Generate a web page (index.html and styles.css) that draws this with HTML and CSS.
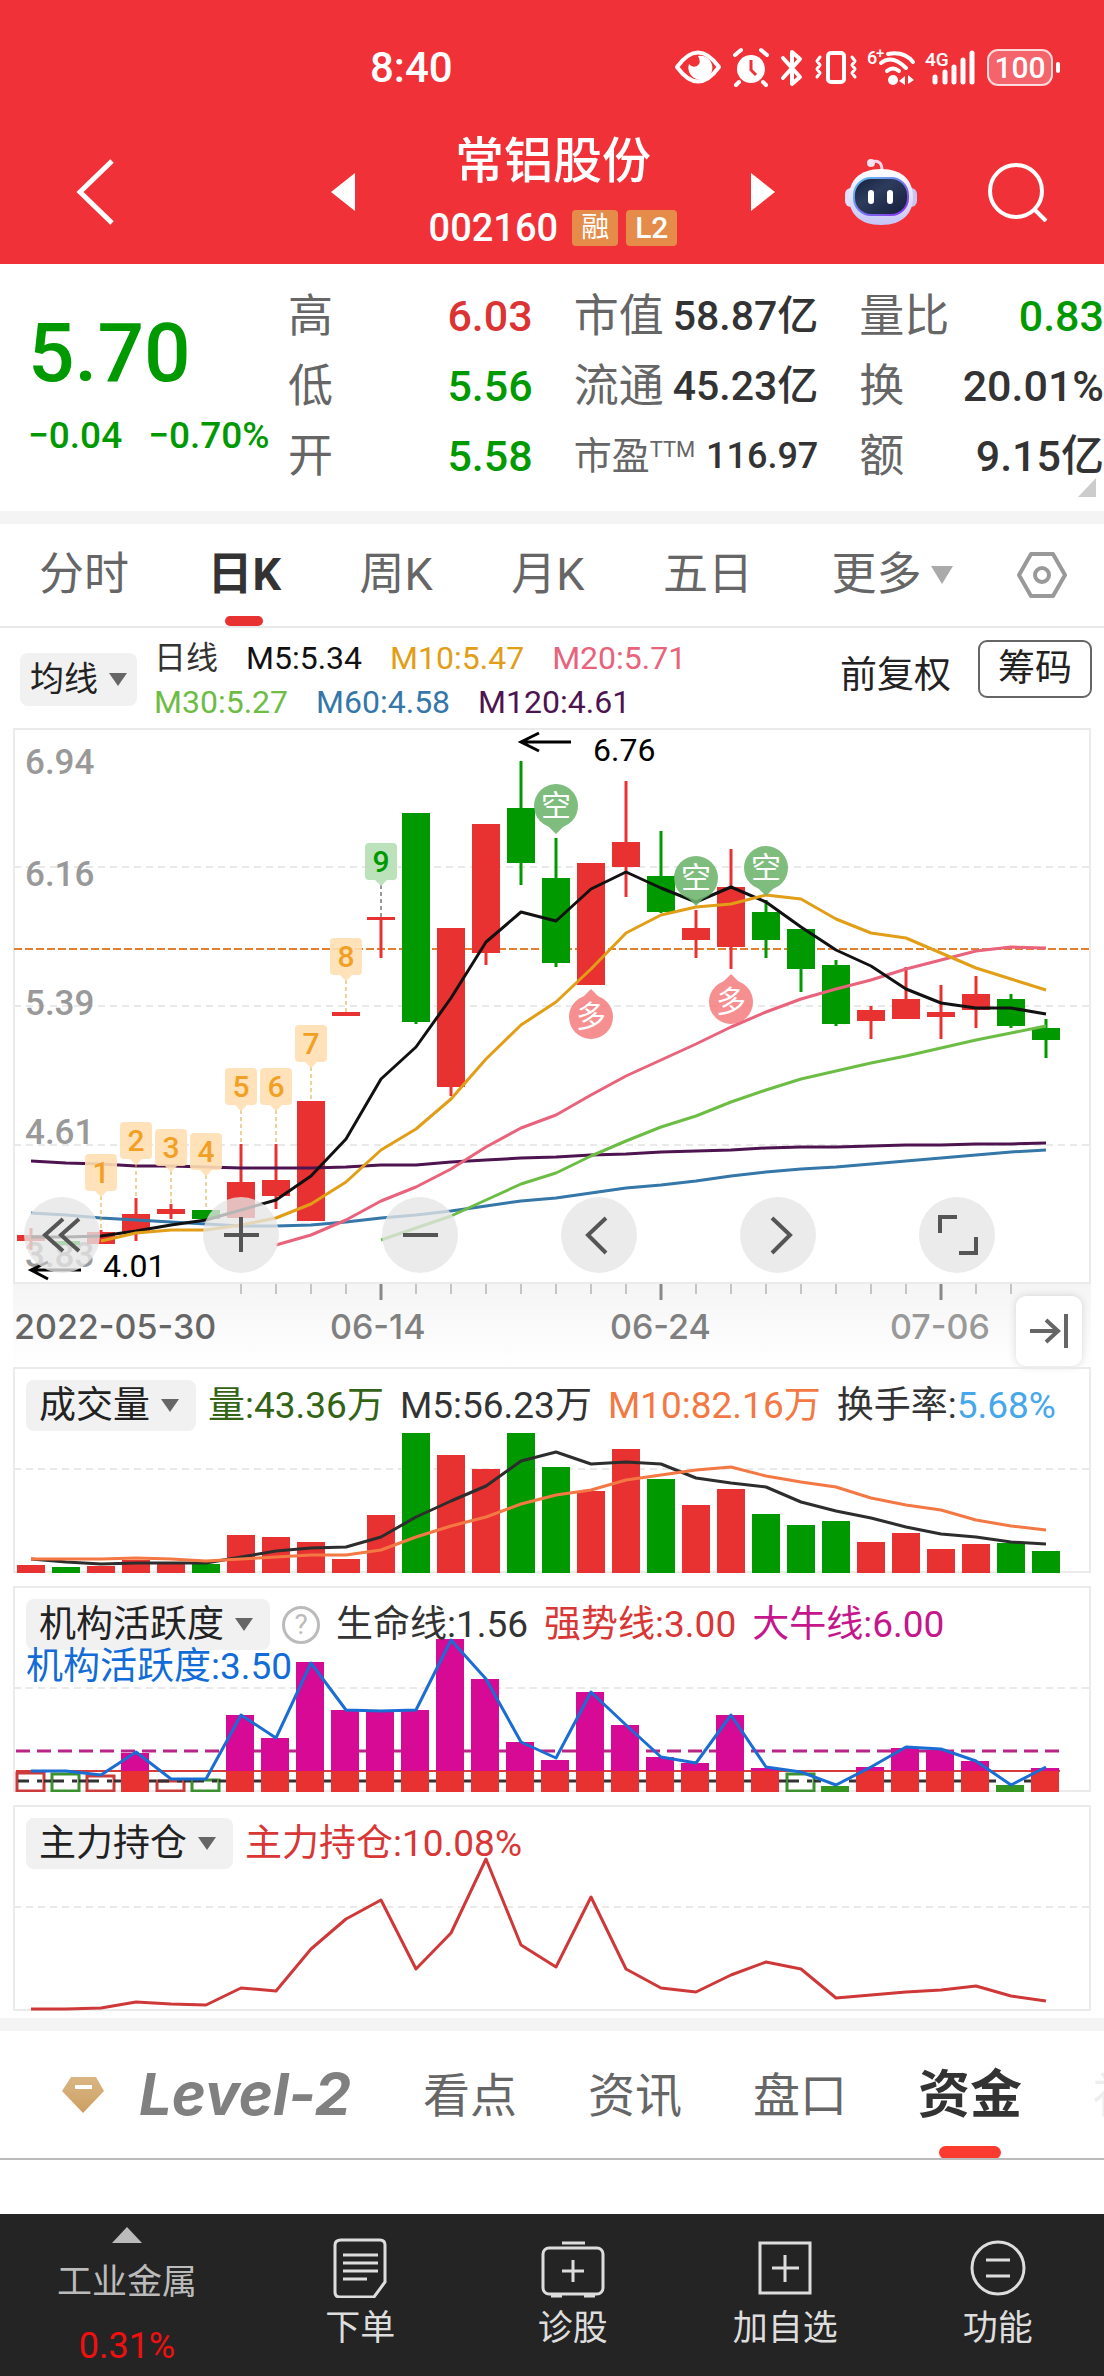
FILE: index.html
```html
<!DOCTYPE html>
<html lang="zh-CN">
<head>
<meta charset="utf-8">
<meta name="viewport" content="width=device-width, initial-scale=1">
<title>常铝股份 002160</title>
<link rel="stylesheet" href="styles.css">
</head>
<body>
<header class="top">
  <div class="status">
    <time class="clock">8:40</time>
    <svg class="status-icons" viewBox="670 44 394 48" aria-hidden="true">
      <g fill="none" stroke="#fff" stroke-width="4" stroke-linecap="round" stroke-linejoin="round">
        <path d="M677 67Q698 38 719 67Q698 96 677 67Z"/>
        <path d="M735 55l6-5M767 55l-6-5M739 82l-3 3M763 82l3 3"/>
        <path d="M783 58l17 19-8 7V52l8 7-17 19" stroke-width="4"/>
        <rect x="828" y="53" width="16" height="29" rx="3"/>
        <path d="M820 57l-3 4 3 4-3 4 3 4-3 4M852 57l3 4-3 4 3 4-3 4 3 4" stroke-width="3"/>
        <path d="M888 54Q904 51 913 62M881 63Q892 54 906 68M887 71Q893 66 899 71" stroke-width="4"/>
        <path d="M935 77v5M945 72v10M954 67v15M963 60v22M972 53v29" stroke-width="5"/>
      </g>
      <path fill="#fff" d="M698 56a12 12 0 1 1-9 8q3 4 8 2q5-3 1-10z"/>
      <circle cx="751" cy="69" r="14" fill="#fff"/>
      <path d="M751 60v10l5 5" fill="none" stroke="#f13138" stroke-width="3"/>
      <circle cx="893" cy="80" r="5" fill="#fff"/>
      <path d="M899 81l6-5v9zM914 80l-6-5v9z" fill="#fff"/>
      <rect x="988" y="50" width="64" height="35" rx="10" fill="#fff" fill-opacity=".25" stroke="#fff" stroke-opacity=".8" stroke-width="2"/>
      <path d="M1058 64v7" stroke="#fff" stroke-width="4" stroke-linecap="round"/>
      <g fill="#fff" font-weight="500">
        <text x="867" y="64" font-size="18">6</text>
        <text x="876" y="58" font-size="15">+</text>
        <text x="925" y="66" font-size="19">4G</text>
        <text x="1020" y="78" font-size="30" text-anchor="middle">100</text>
      </g>
    </svg>
  </div>
  <nav class="title-bar">
    <div class="bar-side">
      <button class="plain" aria-label="返回"><svg width="38" height="66" viewBox="0 0 38 66"><path d="M36 2L4 33l32 31" fill="none" stroke="#fff" stroke-width="5"/></svg></button>
      <button class="plain" aria-label="上一只"><svg width="24" height="38" viewBox="0 0 24 38"><path d="M24 0v38L0 19z" fill="#fff"/></svg></button>
    </div>
    <div class="stock">
      <h1>常铝股份</h1>
      <p><span>002160</span><b class="badge">融</b><b class="badge badge-l2">L2</b></p>
    </div>
    <div class="bar-side">
      <button class="plain" aria-label="下一只"><svg width="24" height="38" viewBox="0 0 24 38"><path d="M0 0v38l24-19z" fill="#fff"/></svg></button>
      <button class="plain" aria-label="智能助手"><svg width="72" height="68" viewBox="844 155 72 68">
        <defs>
          <linearGradient id="shell" x1="0" y1="0" x2="0" y2="1"><stop offset="0" stop-color="#fff"/><stop offset="1" stop-color="#c5c4f5"/></linearGradient>
          <linearGradient id="visor" x1="0" y1="0" x2="1" y2="1"><stop offset="0" stop-color="#17203f"/><stop offset=".4" stop-color="#2d3b5c"/><stop offset="1" stop-color="#141c3a"/></linearGradient>
          <linearGradient id="rim" x1="0" y1="0" x2="1" y2="1"><stop offset="0" stop-color="#5fc6f0"/><stop offset="1" stop-color="#8a2be8"/></linearGradient>
        </defs>
        <path d="M870 159q11-3 11 8" fill="none" stroke="#f3d6ea" stroke-width="3"/>
        <circle cx="870" cy="160" r="4" fill="#f6e2f0"/>
        <rect x="844" y="185" width="12" height="19" rx="6" fill="#e4dff8"/><rect x="904" y="185" width="12" height="19" rx="6" fill="#c9c4f2"/>
        <path d="M880 166c22 0 32 12 32 28s-10 28-32 28-32-12-32-28 10-28 32-28z" fill="url(#shell)"/>
        <rect x="853" y="175" width="54" height="37" rx="17" fill="url(#visor)" stroke="url(#rim)" stroke-width="2"/>
        <path d="M870 190v8M889 190v8" stroke="#fff" stroke-width="6" stroke-linecap="round"/>
      </svg></button>
      <button class="plain" aria-label="搜索"><svg width="60" height="60" viewBox="988 161 60 60"><circle cx="1016" cy="190" r="26" fill="none" stroke="#fff" stroke-width="4"/><path d="M1035 209l11 11" stroke="#fff" stroke-width="4"/></svg></button>
    </div>
  </nav>
</header>

<section class="quote">
  <div class="quote-price">
    <strong>5.70</strong>
    <p><span>−0.04</span><span>−0.70%</span></p>
  </div>
  <dl>
    <div><dt>高</dt><dd class="up">6.03</dd></div>
    <div><dt>低</dt><dd class="down">5.56</dd></div>
    <div><dt>开</dt><dd class="down">5.58</dd></div>
  </dl>
  <dl class="mid">
    <div><dt>市值</dt><dd>58.87亿</dd></div>
    <div><dt>流通</dt><dd>45.23亿</dd></div>
    <div class="small"><dt>市盈<sup>TTM</sup></dt><dd>116.97</dd></div>
  </dl>
  <dl>
    <div><dt>量比</dt><dd class="down">0.83</dd></div>
    <div><dt>换</dt><dd>20.01%</dd></div>
    <div><dt>额</dt><dd>9.15亿</dd></div>
  </dl>
</section>

<nav class="periods">
  <button>分时</button>
  <button class="on">日K</button>
  <button>周K</button>
  <button>月K</button>
  <button>五日</button>
  <button class="more">更多<i class="caret"></i></button>
  <button aria-label="设置"><svg width="50" height="46" viewBox="0 0 50 46" fill="none" stroke="#999" stroke-width="4" stroke-linejoin="round"><path d="M14 2h22l12 21-12 21H14L2 23z"/><circle cx="25" cy="23" r="7"/></svg></button>
</nav>

<section class="averages">
  <button class="tag tag-ma">均线<i class="caret"></i></button>
  <div class="ma-list">
    <p><span class="c-ink">日线</span><span class="c-black">M5:5.34</span><span class="c-m10">M10:5.47</span><span class="c-m20">M20:5.71</span></p>
    <p><span class="c-m30">M30:5.27</span><span class="c-m60">M60:4.58</span><span class="c-m120">M120:4.61</span></p>
  </div>
  <span class="adjust">前复权</span>
  <button class="chips">筹码</button>
</section>

<main class="charts">
  <section class="panel">
    <svg id="kline" viewBox="13 728 1078 556" role="img" aria-label="日K线图"></svg>
    <div class="tools">
      <button aria-label="最早"><svg viewBox="0 0 76 76"><path d="M39 22L21 38l18 16M55 22L37 38l18 16"/></svg></button>
      <button aria-label="放大"><svg viewBox="0 0 76 76"><path d="M21 38h35M38 20v35"/></svg></button>
      <button aria-label="缩小"><svg viewBox="0 0 76 76"><path d="M21 38h35"/></svg></button>
      <button aria-label="左移"><svg viewBox="0 0 76 76"><path d="M45 21L27 38l18 18"/></svg></button>
      <button aria-label="右移"><svg viewBox="0 0 76 76"><path d="M32 21l18 17-18 18"/></svg></button>
      <button aria-label="全屏"><svg viewBox="0 0 76 76"><path d="M21 36V20h17M57 40v16H40"/></svg></button>
    </div>
  </section>

  <div class="axis">
    <svg id="axis" viewBox="13 1284 1078 83" role="img" aria-label="日期轴"></svg>
    <button class="latest" aria-label="最新"><svg width="40" height="36" viewBox="0 0 40 36" fill="none" stroke="#666" stroke-width="4"><path d="M1 18h27M17 7l12 11-12 11M37 1v34"/></svg></button>
  </div>

  <section class="panel">
    <svg id="volume" viewBox="13 1367 1078 206" role="img" aria-label="成交量图"></svg>
    <div class="legend">
      <button class="tag">成交量<i class="caret"></i></button>
      <span class="c-vol">量:43.36万</span><span class="c-ink">M5:56.23万</span><span class="c-orange">M10:82.16万</span><span class="c-ink">换手率:<em>5.68%</em></span>
    </div>
  </section>

  <section class="panel">
    <svg id="activity" viewBox="13 1586 1078 206" role="img" aria-label="机构活跃度图"></svg>
    <div class="legend">
      <button class="tag">机构活跃度<i class="caret"></i></button>
      <button class="help" aria-label="说明">?</button>
      <span class="c-ink">生命线:1.56</span><span class="c-red">强势线:3.00</span><span class="c-bull">大牛线:6.00</span>
      <span class="c-blue second">机构活跃度:3.50</span>
    </div>
  </section>

  <section class="panel">
    <svg id="holding" viewBox="13 1805 1078 206" role="img" aria-label="主力持仓图"></svg>
    <div class="legend">
      <button class="tag">主力持仓<i class="caret"></i></button>
      <span class="c-red">主力持仓:10.08%</span>
    </div>
  </section>
</main>

<nav class="topics">
  <a href="#level2" class="level"><svg width="44" height="38" viewBox="0 0 44 38"><defs><linearGradient id="gold" x1="0" y1="0" x2="0" y2="1"><stop offset="0" stop-color="#dab684"/><stop offset="1" stop-color="#cc9f62"/></linearGradient></defs><path d="M10 1h25l8 14-21 22L1 15z" fill="url(#gold)"/><path d="M14 11h17" stroke="#fff" stroke-width="4"/></svg><span>Level-2</span></a>
  <a href="#view">看点</a>
  <a href="#news">资讯</a>
  <a href="#depth">盘口</a>
  <a href="#funds" class="on">资金</a>
  <a href="#community" class="next">社区</a>
</nav>

<footer class="actions">
  <a href="#sector" class="sector"><i class="caret-up"></i><span>工业金属</span><b>0.31%</b></a>
  <button><svg width="60" height="60" viewBox="0 0 60 60"><path d="M11 2h39q5 0 5 5v37L44 59H10q-5 0-5-5V7q0-5 6-5z"/><path d="M13 17h35M13 25h35M13 33h35M13 41h24"/></svg>下单</button>
  <button><svg width="64" height="60" viewBox="0 0 64 60"><rect x="2" y="10" width="60" height="46" rx="6"/><path d="M21 5h23M32 22v22M21 33h22M10 58h11M43 58h11"/></svg>诊股</button>
  <button><svg width="60" height="60" viewBox="0 0 60 60"><path d="M5 5h50v50H5zM30 17v27M17 30h27"/></svg>加自选</button>
  <button><svg width="60" height="60" viewBox="0 0 60 60"><circle cx="30" cy="30" r="26"/><path d="M18 22h24M18 38h24"/></svg>功能</button>
</footer>
<script src="charts.js"></script>
</body>
</html>
```
FILE: styles.css
```css
* { box-sizing: border-box; margin: 0; padding: 0; }
body { background: #fff; color: #333; font-family: Roboto, "Noto Sans CJK SC", sans-serif; font-size: 36px; line-height: 1.2; min-height: 100vh; display: flex; flex-direction: column; overflow-x: hidden; }
button { border: 0; background: none; font: inherit; color: inherit; cursor: pointer; }
a { color: inherit; text-decoration: none; }
svg { display: block; }
em, i { font-style: normal; }
svg text { font-family: Roboto, "Noto Sans CJK SC", sans-serif; }
svg .date { font-family: Inter, sans-serif; font-weight: 500; }

.top { background: #f13138; color: #fff; height: 264px; }
.status { height: 112px; padding: 24px 40px 0 370px; display: flex; align-items: center; justify-content: space-between; }
.clock { font-size: 42px; font-weight: 500; }
.status-icons { width: 394px; height: 48px; }
.title-bar { height: 152px; padding: 0 56px 0 76px; display: grid; grid-template-columns: 279fr 395fr 297fr; align-items: center; }
.bar-side { display: flex; align-items: center; justify-content: space-between; padding-top: 8px; }
.stock { text-align: center; padding-top: 8px; }
.stock h1 { font-size: 49px; line-height: 64px; font-weight: 500; }
.stock p { display: flex; justify-content: center; align-items: center; gap: 8px; margin-top: 8px; font-size: 38px; font-weight: 500; line-height: 52px; }
.stock p span { margin-right: 6px; }
.badge { background: #e58c4a; border-radius: 4px; font-size: 28px; font-weight: 400; line-height: 36px; padding: 0 9px; }
.badge-l2 { font-size: 30px; font-weight: 500; }

.quote { position: relative; display: grid; grid-template-columns: 219px 1fr 1fr 1fr; column-gap: 41px; padding: 18px 0 19px 28px; }
.quote::after { content: ""; position: absolute; right: 8px; bottom: 14px; border-style: solid; border-width: 0 0 19px 18px; border-color: transparent transparent #ccc; }
.quote-price { color: #090; padding-top: 26px; font-weight: 500; white-space: nowrap; }
.quote-price strong { display: block; font-size: 82px; font-weight: 500; line-height: 90px; }
.quote-price p { display: flex; gap: 26px; margin-top: 18px; font-size: 37px; line-height: 40px; }
.quote dl div { display: flex; justify-content: space-between; align-items: center; height: 70px; white-space: nowrap; }
.quote dt { font-size: 45px; color: #666; }
.quote dd { font-size: 43px; font-weight: 500; }
.quote .mid dd { font-size: 41px; }
.quote .small dt { font-size: 38px; }
.quote .small dd { font-size: 36px; }
.quote sup { font-size: 22px; vertical-align: 12px; line-height: 1; }
.up { color: #dc3333; }
.down { color: #090; }

.periods { border-top: 13px solid #f4f4f4; border-bottom: 2px solid #e9e9e9; height: 117px; padding: 0 37px 0 39px; display: flex; align-items: center; justify-content: space-between; font-size: 45px; color: #666; }
.periods button { position: relative; height: 102px; }
.periods .on, .topics .on { color: #333; font-weight: 700; }
.periods .on::after { content: ""; position: absolute; left: calc(50% - 19px); bottom: 0; width: 38px; height: 10px; border-radius: 5px; background: #e83131; }
.periods .more { display: flex; align-items: center; gap: 9px; margin-right: -14px; }
.caret { border-style: solid; border-width: 13px 9px 0; border-color: #666 transparent transparent; }
.more .caret { border-width: 18px 11px 0; border-top-color: #aaa; }

.averages { height: 100px; padding: 3px 12px 0 20px; display: flex; align-items: center; font-size: 32px; color: #222; }
.tag { display: flex; align-items: center; gap: 11px; height: 51px; padding: 0 16px 0 13px; border-radius: 8px; background: #f1f1f1; color: #222; font-size: 37px; white-space: nowrap; }
.tag-ma { height: 53px; padding: 0 10px; font-size: 34px; }
.ma-list { flex: 1; padding-left: 17px; }
.ma-list p { display: flex; gap: 28px; line-height: 44px; }
.adjust { font-size: 37px; line-height: 48px; margin: 0 27px 8px 0; }
.chips { width: 114px; height: 58px; border: 2px solid #666; border-radius: 9px; font-size: 37px; align-self: flex-start; margin-top: 9px; }

.c-ink { color: #333; } .c-black { color: #111; } .c-m10 { color: #e19e16; } .c-m20 { color: #e8637b; }
.c-m30 { color: #6dbd45; } .c-m60 { color: #3477a8; } .c-m120 { color: #4d1450; } .c-vol { color: #336315; }
.c-orange { color: #f47843; } .c-red { color: #d93636; } .c-bull { color: #c5168c; } .c-blue { color: #126cd8; }
.c-ink em { color: #46a8ea; }

.charts { padding: 0 13px 7px; }
.panel { display: grid; margin-bottom: 13px; }
.panel > * { grid-area: 1 / 1; min-width: 0; }
.panel > svg, .axis > svg { width: 100%; height: auto; }
.panel:first-child, .panel:last-child { margin-bottom: 0; }
.tools { align-self: end; display: flex; justify-content: space-between; padding: 0 96px 11px 11px; }
.tools button { width: 76px; height: 76px; border-radius: 50%; background: rgba(230, 230, 230, .78); }
.tools svg { fill: none; stroke: #555; stroke-width: 4; }
.axis { display: grid; background: linear-gradient(#f5f5f5, #fff); }
.axis > * { grid-area: 1 / 1; }
.latest { justify-self: end; width: 66px; height: 70px; margin: 12px 9px 0 0; border-radius: 10px; background: #fff; box-shadow: 0 0 8px rgba(0, 0, 0, .15); display: flex; align-items: center; justify-content: center; }
.legend { display: flex; flex-wrap: wrap; align-items: center; align-content: flex-start; column-gap: 16px; padding: 13px 0 0 13px; font-size: 37px; line-height: 51px; }
.legend .tag { padding-right: 17px; margin-right: -4px; }
.legend > span { white-space: nowrap; }
.help { width: 38px; height: 38px; border: 3px solid #bbb; border-radius: 50%; color: #bbb; font-size: 28px; line-height: 32px; }
.second { flex-basis: 100%; line-height: 34px; }

.topics { border-top: 13px solid #f4f4f4; border-bottom: 2px solid #bbb; height: 142px; padding-left: 61px; display: flex; align-items: center; gap: 71px; overflow: hidden; white-space: nowrap; font-size: 47px; color: #666; }
.topics a { flex: none; line-height: 127px; padding-top: 2px; }
.topics .level { display: flex; align-items: center; gap: 34px; width: 291px; padding: 0; color: #808080; font-family: Inter, sans-serif; font-size: 58px; font-weight: 700; font-style: italic; }
.topics .on { position: relative; font-size: 52px; }
.topics .on::after { content: ""; position: absolute; left: calc(50% - 31px); bottom: 0; width: 62px; height: 13px; border-radius: 7px; background: #fb3a30; }
.topics .next { color: #eee; }

.actions { margin-top: auto; min-height: 162px; background: #242424; color: #ddd; display: flex; font-size: 35px; line-height: 44px; }
.actions > * { flex: 1; display: flex; flex-direction: column; align-items: center; padding-top: 24px; gap: 9px; }
.actions .sector { flex: 0 0 23%; padding-top: 13px; gap: 18px; color: #bbb; }
.actions b { color: #f01010; font-weight: 400; margin-top: 1px; font-size: 36px; }
.caret-up { border-style: solid; border-width: 0 15px 16px; border-color: transparent transparent #bbb; }
.actions svg { fill: none; stroke: #ddd; stroke-width: 3; }
```
FILE: charts.js
```js
const UP = '#e83131', DOWN = '#090', STEP = 35, FIRST = 31, BAR = 28;
const cx = i => FIRST + STEP * i;

// The markup of one chart is collected and written into its svg in one go.
const rect = (x, y, w, h, fill, more = '') => `<rect x="${x}" y="${y}" width="${w}" height="${h}" fill="${fill}" ${more}/>`;
const path = (d, stroke, width = 3, more = '') => `<path d="${d}" fill="none" stroke="${stroke}" stroke-width="${width}" ${more}/>`;
const text = (x, y, size, fill, s, more = '') => `<text x="${x}" y="${y}" font-size="${size}" fill="${fill}" ${more}>${s}</text>`;
const line = (ys, stroke, start = 0) => path(ys.map((y, i) => `${i ? 'L' : 'M'}${cx(i + start)} ${y}`).join(''), stroke, 3, 'stroke-linejoin="round"');
const frame = (y, h) => rect(14, y + 1, 1076, h - 2, 'none', 'stroke="#ebebeb" stroke-width="2"');
const grid = y => path(`M14 ${y}H1090`, '#e9e9e9', 2, 'stroke-dasharray="7 5"');
const put = (id, parts) => { document.getElementById(id).innerHTML = parts.join(''); };

// direction, high, body top, body bottom, low
const candles = [
  ['u', 1228, 1235, 1241, 1250], ['d', 1241, 1241, 1245, 1245], ['u', 1230, 1232, 1244, 1244], ['u', 1198, 1214, 1233, 1241],
  ['u', 1204, 1209, 1214, 1219], ['d', 1210, 1210, 1219, 1219], ['u', 1144, 1182, 1218, 1218], ['u', 1144, 1180, 1196, 1209],
  ['u', 1101, 1101, 1221, 1221], ['u', 1012, 1012, 1016, 1016], ['u', 917, 917, 920, 958], ['d', 813, 813, 1022, 1024],
  ['u', 928, 928, 1087, 1096], ['u', 824, 824, 953, 965], ['d', 761, 808, 863, 885], ['d', 838, 878, 963, 967],
  ['u', 863, 863, 985, 985], ['u', 781, 842, 867, 897], ['d', 831, 876, 912, 913], ['u', 910, 928, 940, 958],
  ['u', 849, 887, 947, 969], ['d', 900, 912, 940, 958], ['d', 929, 929, 969, 992], ['d', 960, 965, 1024, 1026],
  ['u', 1006, 1010, 1021, 1039], ['u', 967, 999, 1019, 1019], ['u', 985, 1012, 1017, 1039], ['u', 976, 994, 1010, 1028],
  ['d', 994, 999, 1026, 1028], ['d', 1019, 1028, 1040, 1058]
];
const averages = [
  [[1161, 1163, 1164, 1166, 1166, 1167, 1168, 1168, 1168, 1167, 1165, 1165, 1162, 1160, 1158, 1157, 1155, 1154, 1152, 1151, 1150, 1148, 1147, 1147, 1146, 1145, 1145, 1144, 1144, 1143], '#4d1450', 0],
  [[1213, 1215, 1218, 1220, 1222, 1224, 1226, 1226, 1225, 1222, 1218, 1215, 1211, 1206, 1201, 1198, 1193, 1188, 1185, 1181, 1176, 1172, 1169, 1167, 1164, 1161, 1158, 1155, 1152, 1150], '#3477a8', 0],
  [[1240, 1228, 1216, 1200, 1184, 1173, 1156, 1141, 1127, 1116, 1102, 1090, 1079, 1071, 1063, 1056, 1048, 1040, 1033, 1026], '#6dbd45', 10],
  [[1245, 1235, 1220, 1201, 1187, 1169, 1147, 1128, 1115, 1095, 1076, 1060, 1044, 1027, 1012, 999, 989, 980, 969, 960, 951, 947, 948], '#e8637b', 7],
  [[1237, 1237, 1236, 1231, 1225, 1220, 1210, 1200, 1176, 1139, 1079, 1047, 998, 942, 912, 921, 889, 872, 888, 902, 887, 902, 927, 950, 966, 989, 1003, 1008, 1008, 1014], '#111', 0],
  [[1241, 1233, 1230, 1230, 1225, 1218, 1204, 1182, 1150, 1129, 1099, 1059, 1025, 1002, 969, 933, 915, 907, 904, 895, 899, 919, 933, 938, 953, 968, 979, 990], '#e19e16', 2]
];
const flags = [[2, 1154], [3, 1122], [4, 1129], [5, 1133], [6, 1068], [7, 1068], [8, 1025], [9, 938], [10, 843]];
const flag = ([i, y], n) => {
  const x = cx(i), last = n === 8, ink = last ? '#090' : '#f2a024';
  return path(`M${x} ${y + 42}V${candles[i][1]}`, last ? '#333' : '#dda53a', 1, 'stroke-dasharray="4 3"')
    + `<path d="M${x - 12} ${y}h24q4 0 4 4v29q0 4-4 4h-6l-6 6-6-6h-6q-4 0-4-4v-29q0-4 4-4z" fill="${last ? '#b4dfb4' : '#ffdfb3'}" fill-opacity=".9"/>`
    + text(x, y + 29, 30, ink, n + 1, 'text-anchor="middle" font-weight="500"');
};
const pin = (i, y, s) => {
  const x = cx(i), fill = s === '空' ? '#6db56d' : '#f58080', dir = s === '空' ? 1 : -1;
  return `<g opacity=".88"><circle cx="${x}" cy="${y}" r="22" fill="${fill}"/><path d="M${x - 9} ${y + 19 * dir}L${x} ${y + 28 * dir}L${x + 9} ${y + 19 * dir}z" fill="${fill}"/></g>`
    + text(x, y + 10, 30, '#fff', s, 'text-anchor="middle"');
};

put('kline', [
  frame(728, 556), grid(867), grid(1006), grid(1145),
  path('M14 949H1090', '#e08030', 2, 'stroke-dasharray="8 3"'),
  ...[['6.94', 774], ['6.16', 886], ['5.39', 1015], ['4.61', 1144], ['3.83', 1267]].map(([s, y]) => text(25, y, 35, '#999', s, 'font-weight="500"')),
  ...candles.map(([dir, high, top, bottom, low], i) => {
    const c = dir === 'u' ? UP : DOWN;
    return path(`M${cx(i)} ${high}V${low}`, c) + rect(cx(i) - 14, top, BAR, bottom - top, c);
  }),
  ...averages.map(a => line(...a)),
  ...flags.map(flag),
  pin(15, 806, '空'), pin(19, 878, '空'), pin(21, 868, '空'), pin(16, 1017, '多'), pin(20, 1002, '多'),
  path('M571 742H522M539 733L521 742L539 751', '#000'),
  path('M81 1270H32M48 1262L31 1270L48 1279', '#000'),
  text(593, 761, 32, '#000', '6.76'), text(103, 1277, 32, '#000', '4.01')
]);

const ticks = Array.from({ length: 23 }, (_, k) => k + 6);
put('axis', [
  ...ticks.map(i => i % 8 === 2 ? path(`M${cx(i)} 1284V1300`, '#888') : path(`M${cx(i)} 1284V1294`, '#c4c4c4', 2)),
  ...[['2022-05-30', 14, '#666'], ['06-14', 330, '#808080'], ['06-24', 610, '#808080'], ['07-06', 890, '#999']]
    .map(([s, x, c]) => text(x, 1339, 34, c, s, 'class="date"'))
]);

const volumes = [1565, 1567, 1566, 1560, 1564, 1564, 1535, 1537, 1542, 1559, 1515, 1433, 1455, 1469, 1433, 1467, 1491, 1449, 1479, 1505, 1489, 1514, 1525, 1521, 1542, 1533, 1549, 1544, 1543, 1551];
put('volume', [
  frame(1367, 206), grid(1469),
  ...volumes.map((y, i) => rect(cx(i) - 14, y, BAR, 1573 - y, candles[i][0] === 'u' ? UP : DOWN)),
  line([1559, 1562, 1564, 1563, 1563, 1563, 1557, 1551, 1548, 1547, 1537, 1517, 1501, 1486, 1461, 1452, 1464, 1462, 1464, 1478, 1483, 1487, 1502, 1511, 1518, 1527, 1534, 1537, 1542, 1544], '#2d2d2d'),
  line([1559, 1559, 1559, 1558, 1559, 1561, 1559, 1557, 1555, 1555, 1550, 1537, 1526, 1517, 1504, 1495, 1490, 1480, 1475, 1470, 1467, 1476, 1482, 1487, 1498, 1505, 1510, 1520, 1526, 1530], '#f47843')
]);

// Bars past the strong line are magenta above it; h/g are hollow red/green, s is solid green.
const STRONG = 1771;
const activity = [['h', 1772], ['g', 1773], ['h', 1775], ['m', 1753], ['h', 1780], ['g', 1779], ['m', 1715], ['m', 1738], ['m', 1662], ['m', 1710], ['m', 1712], ['m', 1710], ['m', 1639], ['m', 1679], ['m', 1742], ['m', 1760], ['m', 1692], ['m', 1725], ['m', 1757], ['m', 1763], ['m', 1715], ['m', 1768], ['g', 1773], ['s', 1786], ['m', 1767], ['m', 1748], ['m', 1750], ['m', 1761], ['s', 1785], ['m', 1768]];
put('activity', [
  frame(1586, 206), grid(1688),
  path('M16 1751H1060', '#b82586', 3, 'stroke-dasharray="14 7"'),
  path('M16 1771H1060', '#d83a3a', 2),
  ...activity.map(([kind, y], i) => {
    const x = cx(i) - 15;
    if (kind === 'm') return rect(x, y, BAR, STRONG - y, '#d60a94') + rect(x, STRONG, BAR, 1792 - STRONG, UP);
    if (kind === 's') return rect(x, y, BAR, 1792 - y, '#339420');
    return rect(x + 1, y + 1, BAR - 1, 1790 - y, '#fff', `stroke="${kind === 'h' ? '#cc3a3a' : '#3b9130'}" stroke-width="3"`)
      + path(`M${x + 2} 1781h11m8 0h5`, '#333');
  }),
  ...activity.slice(1).map((_, i) => path(`M${cx(i) + 13} 1781h7`, '#333')),
  line([1771, 1771, 1775, 1752, 1779, 1779, 1715, 1738, 1663, 1710, 1711, 1710, 1640, 1679, 1742, 1758, 1692, 1725, 1757, 1763, 1715, 1767, 1772, 1785, 1767, 1747, 1749, 1761, 1785, 1767], '#1a6dd2')
]);

put('holding', [
  frame(1805, 206), grid(1907),
  line([2009, 2009, 2008, 2002, 2004, 2005, 1988, 1991, 1949, 1919, 1900, 1969, 1933, 1859, 1945, 1967, 1897, 1969, 1988, 1992, 1975, 1962, 1969, 1998, 1995, 1992, 1990, 1986, 1996, 2001], '#cf3838')
]);
```
